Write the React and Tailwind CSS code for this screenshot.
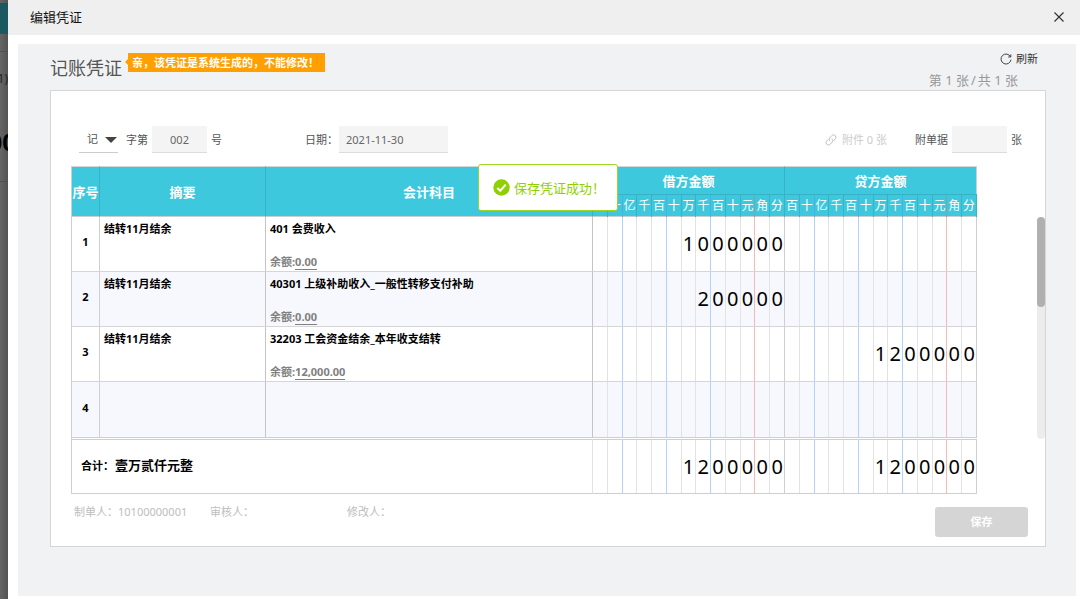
import React from "react";

const UNITS = ["百", "十", "亿", "千", "百", "十", "万", "千", "百", "十", "元", "角", "分"];

const ROWS = [
  { id: 1, summary: "结转11月结余", account: "401 会费收入", balance: "0.00", debit: "1000000", credit: "" },
  { id: 2, summary: "结转11月结余", account: "40301 上级补助收入_一般性转移支付补助", balance: "0.00", debit: "200000", credit: "" },
  { id: 3, summary: "结转11月结余", account: "32203 工会资金结余_本年收支结转", balance: "12,000.00", debit: "", credit: "1200000" },
  { id: 4, summary: "", account: "", balance: "", debit: "", credit: "" },
];

function lineColor(i, header) {
  if (i === 1 || i === 4 || i === 7) return header ? "border-[#4aafe8]" : "border-[#b0d2fb]";
  if (i === 10) return header ? "border-[#8f9ba5]" : "border-[#f6b9b9]";
  if (i === 12) return header ? "border-[#38b2c6]" : "border-[#cfcfcf]";
  return header ? "border-[#38b2c6]" : "border-[#e3e3e3]";
}

function UnitCells() {
  return (
    <div className="grid h-[21px] grid-cols-13">
      {UNITS.map((u, i) => (
        <span key={i} className={`border-r text-center text-xs leading-[22px] font-normal ${lineColor(i, true)}`}>
          {u}
        </span>
      ))}
    </div>
  );
}

function Digits({ value, className }) {
  const cells = value.padStart(13, " ").split("");
  return (
    <div className={`grid grid-cols-13 ${className}`}>
      {cells.map((c, i) => (
        <span key={i} className={`flex items-center justify-center border-r text-xl font-normal text-black ${lineColor(i, false)}`}>
          {c.trim()}
        </span>
      ))}
    </div>
  );
}

function Backdrop() {
  return (
    <div className="w-2 shrink-0 overflow-hidden bg-linear-to-r from-[#646564] to-[#525352] text-black" aria-hidden="true">
      <div className="h-[3px]" />
      <div className="h-[31px] bg-[#1b5961]" />
      <div className="h-[18px] border-b border-[#505050]" />
      <div className="flex h-[50px] items-center justify-end pt-1 text-xs text-[#222]">1)</div>
      <div className="flex h-[80px] items-center justify-end border-b border-[#505050] text-2xl font-bold">
        <span className="-mr-2">00</span>
      </div>
    </div>
  );
}

const field = "h-[27px] border-b border-[#dcdcdc] bg-[#f4f4f4] text-[#666] outline-none";
const headCell = "border-r border-b border-r-[#38b2c6] border-b-[#c9cfd0] border-t border-t-[#d2d6d6] p-0 align-middle";

export default function App() {
  return (
    <div className="flex min-h-screen bg-white font-['Noto_Sans','Noto_Sans_CJK_SC',sans-serif] text-[11px] leading-4 text-[#555]">
      <Backdrop />
      <main className="flex min-w-0 flex-1 flex-col">
        <header className="flex h-[35px] items-center justify-between bg-[#efefef] pr-4 pb-px pl-[22px]">
          <h1 className="text-[13px] text-[#111]">编辑凭证</h1>
          <button type="button" aria-label="关闭">
            <svg width="10" height="10" viewBox="0 0 10 10" fill="none" stroke="#333" strokeWidth="1.2">
              <path d="M0.5 0.5 9.5 9.5M9.5 0.5 0.5 9.5" />
            </svg>
          </button>
        </header>

        <div className="mt-[9px] mr-1 mb-[3px] ml-[10px] flex-1 bg-[#f1f2f4] pr-[30px] pl-8">
          <div className="flex h-[46px] justify-between">
            <div className="flex items-start gap-1.5">
              <h2 className="pt-3 text-lg leading-6 text-[#555]">记账凭证</h2>
              <div className="relative mt-[9px] bg-[#ff9f00] pr-[6px] pl-1 text-[11px] leading-[19px] font-bold text-white">
                <span className="absolute top-[6px] -left-[3px] border-y-[3px] border-r-[3px] border-y-transparent border-r-[#ff9f00]" />
                亲，该凭证是系统生成的，不能修改！
              </div>
            </div>
            <div className="flex flex-col items-end pt-1 pr-2">
              <button type="button" className="flex h-[22px] items-center gap-1 text-[#333]">
                <svg width="12" height="12" viewBox="0 0 12 12" fill="none" stroke="#444" strokeWidth="1">
                  <path d="M10.6 4A5 5 0 1 0 11 6.6" />
                  <path d="M8.2 4h2.6V1.4" />
                </svg>
                刷新
              </button>
              <div className="mr-5 flex h-[22px] items-center gap-0.5 text-[13px] text-[#999]">
                <span>第 1 张</span>
                <span>/</span>
                <span>共 1 张</span>
              </div>
            </div>
          </div>

          <section className="relative border border-[#d6d6d6] bg-white pt-[35px] pb-[9px] pl-5">
            <form className="flex items-center pr-[23px] pl-2" onSubmit={(e) => e.preventDefault()}>
              <div className="relative mr-2">
                <select aria-label="凭证字" defaultValue="记" className="h-[26px] w-[39px] appearance-none border-b border-[#ccc] bg-white pl-2 outline-none">
                  <option>记</option>
                </select>
                <span className="pointer-events-none absolute top-[10px] right-px border-x-[6px] border-t-[6px] border-x-transparent border-t-[#444]" />
              </div>
              <label htmlFor="no">字第</label>
              <input id="no" defaultValue="002" className={`${field} mx-1 w-[55px] text-center`} />
              <span>号</span>
              <label htmlFor="date" className="ml-[83px]">日期：</label>
              <input id="date" defaultValue="2021-11-30" className={`${field} ml-px w-[109px] pl-[7px]`} />
              <a href="#files" className="mr-7 ml-auto flex items-center gap-[5px] text-[#ccc]">
                <svg width="12" height="12" viewBox="0 0 12 12" fill="none" stroke="#c0c0c0" strokeWidth="1" strokeLinecap="round">
                  <path d="M4.600 6.800A2.400 2.400 0 0 1 4.800 3.700L6.700 1.700A2.400 2.400 0 0 1 10.400 4.800L8.900 6.500" />
                  <path d="M7.100 4.800A2.400 2.400 0 0 1 7.100 8.200L5.300 10.200A2.400 2.400 0 0 1 1.600 7.100L3 5.500" />
                </svg>
                附件 0 张
              </a>
              <label htmlFor="bills">附单据</label>
              <input id="bills" className={`${field} mx-1 w-[55px] text-center`} />
              <span>张</span>
            </form>

            <div className="relative mt-[13px] pr-[68px]">
              <table className="w-full table-fixed border-separate border-spacing-0 border-l border-[#cfcfcf] text-left">
                <colgroup>
                  <col className="w-7" />
                  <col className="w-[166px]" />
                  <col />
                  <col className="w-48" />
                  <col className="w-48" />
                </colgroup>
                <thead className="bg-[#3ec8dd] text-center text-[13px] leading-4 text-white">
                  <tr className="h-7">
                    <th rowSpan={2} className={headCell}>序号</th>
                    <th rowSpan={2} className={headCell}>摘要</th>
                    <th rowSpan={2} className={headCell}>会计科目</th>
                    <th className="border-t border-r border-t-[#d2d6d6] border-r-[#38b2c6] p-0">借方金额</th>
                    <th className="border-t border-r border-t-[#d2d6d6] border-r-[#cfcfcf] p-0">贷方金额</th>
                  </tr>
                  <tr>
                    <th className="border-t border-b border-t-[#38b2c6] border-b-[#c9cfd0] p-0"><UnitCells /></th>
                    <th className="border-t border-b border-t-[#38b2c6] border-b-[#c9cfd0] p-0"><UnitCells /></th>
                  </tr>
                </thead>
                <tbody className="font-bold text-black">
                  {ROWS.map((r) => {
                    const edge = r.id === 4 ? "" : "border-b border-b-[#d6d6d6]";
                    return (
                      <tr key={r.id} className="h-[55px] even:bg-[#f7f8fd]">
                        <td className={`border-r border-r-[#cfcfcf] p-0 pb-1 text-center align-middle ${edge}`}>{r.id}</td>
                        <td className={`border-r border-r-[#c4c4c4] px-1 pt-1 align-top ${edge}`}>{r.summary}</td>
                        <td className={`border-r border-r-[#c4c4c4] px-1 pt-1 pb-0 align-top ${edge}`}>
                          {r.account}
                          {r.balance && (
                            <div className="mt-[17px] text-[#808080]">
                              余额:<span className="inline-block border-b border-[#808080] leading-[15px]">{r.balance}</span>
                            </div>
                          )}
                        </td>
                        <td className={`p-0 align-top ${edge}`}>
                          <Digits value={r.debit} className={r.id === 4 ? "h-[55px]" : "h-[54px]"} />
                        </td>
                        <td className={`p-0 align-top ${edge}`}>
                          <Digits value={r.credit} className={r.id === 4 ? "h-[55px]" : "h-[54px]"} />
                        </td>
                      </tr>
                    );
                  })}
                </tbody>
                <tfoot className="text-black">
                  <tr>
                    <td colSpan={3} className="border-t-[3px] border-r border-b border-t-[#cfcfcf] border-r-[#e3e3e3] border-b-[#cfcfcf] p-0 pb-[3px] pl-[9px] font-bold [border-top-style:double]">
                      合计：<span className="ml-px text-[13px]">壹万贰仟元整</span>
                    </td>
                    <td className="border-t-[3px] border-b border-[#cfcfcf] p-0 [border-top-style:double]">
                      <Digits value="1200000" className="h-[53px]" />
                    </td>
                    <td className="border-t-[3px] border-b border-[#cfcfcf] p-0 [border-top-style:double]">
                      <Digits value="1200000" className="h-[53px]" />
                    </td>
                  </tr>
                </tfoot>
              </table>
              <div className="absolute top-[51px] right-0 bottom-[55px] w-2 rounded bg-[#ececec]">
                <div className="h-[90px] rounded bg-[#b0b0b0]" />
              </div>
            </div>

            <footer className="flex items-start pt-2 pr-[17px] pl-[3px] leading-5 text-[#bdbdbd]">
              <span className="w-[136px]">制单人：10100000001</span>
              <span className="w-[137px]">审核人：</span>
              <span>修改人：</span>
              <button type="button" disabled className="mt-[5px] ml-auto h-[30px] w-[93px] rounded-[3px] bg-[#d5d5d5] font-bold text-white">
                保存
              </button>
            </footer>

            <div role="status" className="absolute top-[73px] left-1/2 flex h-[47px] w-[140px] -translate-x-1/2 items-center gap-1 rounded-[3px] border border-[#9bd71f] bg-white pl-[14px] text-[13px] whitespace-nowrap text-[#8fd003]">
              <svg width="17" height="17" viewBox="0 0 17 17" className="shrink-0">
                <circle cx="8.500" cy="8.500" r="8.200" fill="#8fd003" />
                <path d="M4.300 8.900 7.300 11.700 12.700 5.600" fill="none" stroke="#fff" strokeWidth="2" />
              </svg>
              保存凭证成功！
            </div>
          </section>
        </div>
      </main>
    </div>
  );
}
